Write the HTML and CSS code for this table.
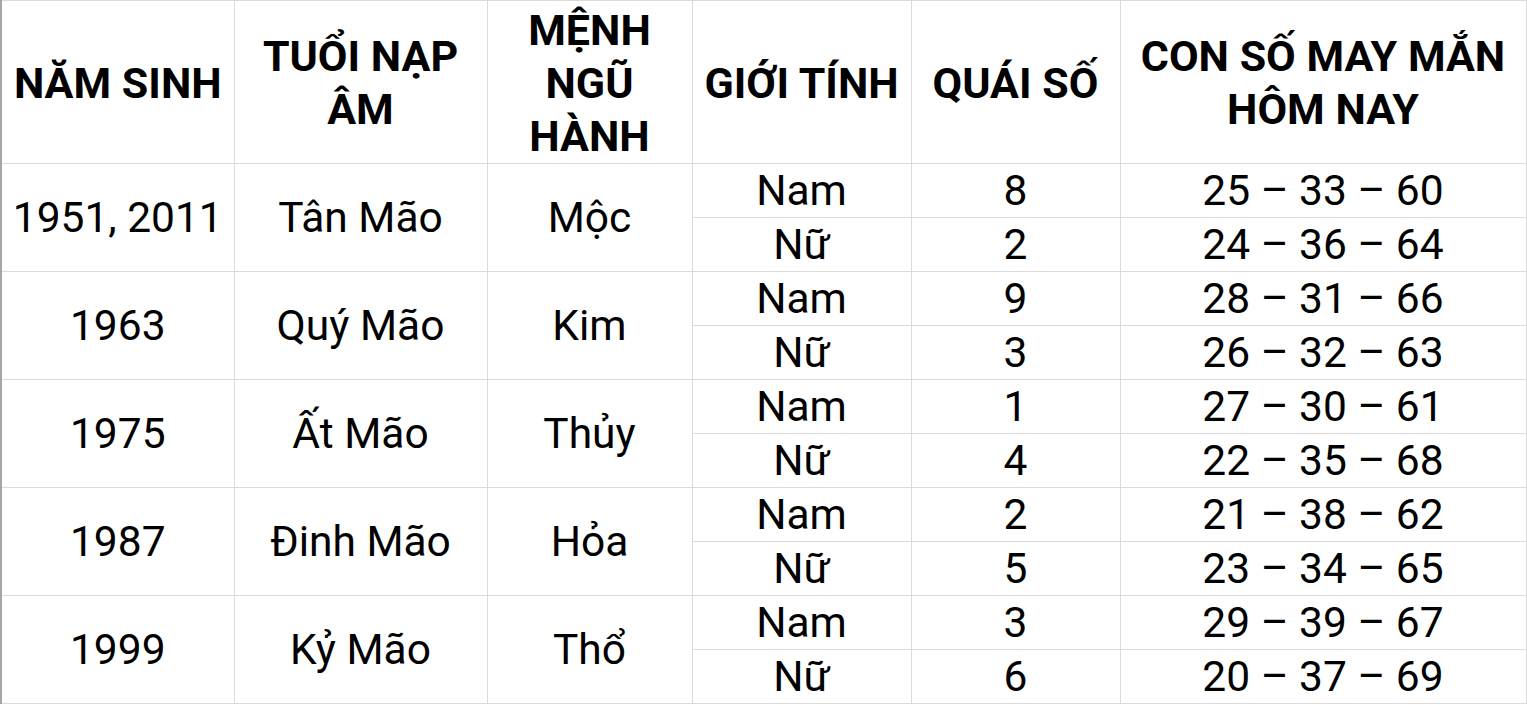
FILE: index.html
```html
<!DOCTYPE html>
<html lang="vi">
<head>
<meta charset="utf-8">
<title>Con số may mắn tuổi Mão</title>
<link rel="stylesheet" href="styles.css">
</head>
<body>
<table class="luck">
  <colgroup>
    <col class="c1"><col class="c2"><col class="c3"><col class="c4"><col class="c5"><col class="c6">
  </colgroup>
  <thead>
    <tr class="head">
      <th>NĂM SINH</th>
      <th>TUỔI NẠP<br>ÂM</th>
      <th>MỆNH<br>NGŨ<br>HÀNH</th>
      <th>GIỚI TÍNH</th>
      <th>QUÁI SỐ</th>
      <th>CON SỐ MAY MẮN<br>HÔM NAY</th>
    </tr>
  </thead>
  <tbody>
    <tr><td rowspan="2">1951, 2011</td><td rowspan="2">Tân Mão</td><td rowspan="2">Mộc</td><td>Nam</td><td>8</td><td>25 – 33 – 60</td></tr>
    <tr><td>Nữ</td><td>2</td><td>24 – 36 – 64</td></tr>
    <tr><td rowspan="2">1963</td><td rowspan="2">Quý Mão</td><td rowspan="2">Kim</td><td>Nam</td><td>9</td><td>28 – 31 – 66</td></tr>
    <tr><td>Nữ</td><td>3</td><td>26 – 32 – 63</td></tr>
    <tr><td rowspan="2">1975</td><td rowspan="2">Ất Mão</td><td rowspan="2">Thủy</td><td>Nam</td><td>1</td><td>27 – 30 – 61</td></tr>
    <tr><td>Nữ</td><td>4</td><td>22 – 35 – 68</td></tr>
    <tr><td rowspan="2">1987</td><td rowspan="2">Đinh Mão</td><td rowspan="2">Hỏa</td><td>Nam</td><td>2</td><td>21 – 38 – 62</td></tr>
    <tr><td>Nữ</td><td>5</td><td>23 – 34 – 65</td></tr>
    <tr><td rowspan="2">1999</td><td rowspan="2">Kỷ Mão</td><td rowspan="2">Thổ</td><td>Nam</td><td>3</td><td>29 – 39 – 67</td></tr>
    <tr><td>Nữ</td><td>6</td><td>20 – 37 – 69</td></tr>
  </tbody>
</table>
</body>
</html>
```
FILE: styles.css
```css
html, body {
  margin: 0;
  padding: 0;
  background: #ffffff;
}
body {
  font-family: Roboto, "Liberation Sans", Arial, sans-serif;
  color: #000000;
}
.luck {
  border-collapse: collapse;
  table-layout: fixed;
  width: 1526px;
  border-left: 2px solid #a6a6a6;
}
.c1 { width: 233px; }
.c2 { width: 253px; }
.c3 { width: 205px; }
.c4 { width: 219px; }
.c5 { width: 209px; }
.c6 { width: 406px; }
.luck th,
.luck td {
  border: 1px solid #dadada;
  padding: 0;
  text-align: center;
  vertical-align: middle;
  overflow: hidden;
  white-space: nowrap;
}
.luck th {
  font-weight: 700;
  font-size: 43px;
  line-height: 53px;
  height: 160px;
  padding-top: 2px;
}
.luck td {
  font-weight: 400;
  font-size: 42.5px;
  line-height: 48px;
  height: 53px;
}
.luck th:first-child,
.luck tbody tr td[rowspan]:first-child {
  border-left: 2px solid #a6a6a6;
}
```
